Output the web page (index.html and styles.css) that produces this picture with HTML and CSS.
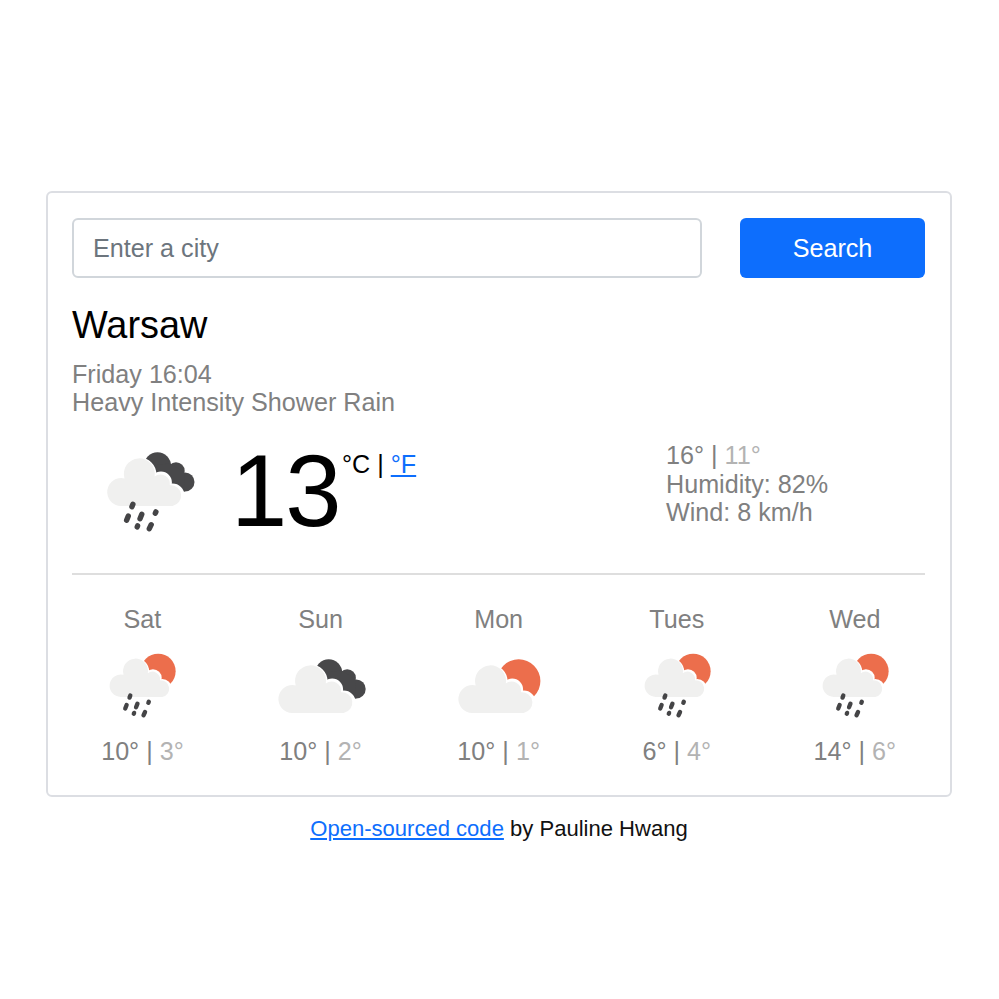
FILE: index.html
```html
<!DOCTYPE html>
<html lang="en">
<head>
<meta charset="utf-8">
<title>Weather</title>
<link rel="stylesheet" href="styles.css">
</head>
<body>
<svg class="sprite" aria-hidden="true">
  <defs>
    <g id="cloud">
      <g class="halo">
        <circle cx="45.5" cy="41.5" r="15.5"/><circle cx="67" cy="49.500" r="9.500"/><circle cx="78.500" cy="62.500" r="10.500"/>
      </g>
      <path class="cloud" d="M27 73a14 14 0 1 1 3.500-27.600A15.500 15.500 0 1 1 60.600 43.500A9.500 9.500 0 0 1 75.800 52.200A10.500 10.500 0 0 1 78.500 73Z"/>
    </g>
    <g id="dark" class="dark">
      <circle cx="63.500" cy="32.800" r="13.500"/><circle cx="82" cy="38" r="8.700"/><circle cx="91" cy="49" r="9.500"/>
      <path d="M63 32L76 30.500L90 39L91 58.500L74 58L60 46Z"/>
    </g>
    <circle id="sun" class="sun" cx="73.500" cy="41" r="21.700"/>
    <path id="rain" class="rain" d="M38.900 71.200L37.900 73.800M34.300 83L32.600 87.300M47.800 81.300L46 85.800M61.900 78.900L61.300 80.300M43.600 92.800L43.200 93.900M57.200 91.700L55.300 95.700"/>
  </defs>
</svg>
<main class="card">
  <form class="search">
    <input class="search-input" type="text" placeholder="Enter a city">
    <button class="search-button" type="button">Search</button>
  </form>
  <h1 class="city">Warsaw</h1>
  <p class="details">Friday 16:04<br>Heavy Intensity Shower Rain</p>
  <section class="current">
    <svg class="current-icon" viewBox="0 0 110 100"><use href="#dark"/><use href="#cloud"/><use href="#rain"/></svg>
    <span class="temperature">13</span>
    <span class="units">°C | <a href="#">°F</a></span>
    <p class="stats">16° | <span class="low">11°</span><br>Humidity: 82%<br>Wind: 8 km/h</p>
  </section>
  <section class="forecast">
    <div class="day"><span>Sat</span><svg class="day-icon" viewBox="0 0 110 90"><g transform="translate(12 -1.8) scale(.805)"><use href="#sun"/><use href="#cloud"/><use href="#rain"/></g></svg><span>10° | <span class="low">3°</span></span></div>
    <div class="day"><span>Sun</span><svg class="day-icon" viewBox="0.8 0 110 90"><use href="#dark"/><use href="#cloud"/></svg><span>10° | <span class="low">2°</span></span></div>
    <div class="day"><span>Mon</span><svg class="day-icon" viewBox="-1.2 0 110 90"><use href="#sun"/><use href="#cloud"/></svg><span>10° | <span class="low">1°</span></span></div>
    <div class="day"><span>Tues</span><svg class="day-icon" viewBox="0 0 110 90"><g transform="translate(12 -1.8) scale(.805)"><use href="#sun"/><use href="#cloud"/><use href="#rain"/></g></svg><span>6° | <span class="low">4°</span></span></div>
    <div class="day"><span>Wed</span><svg class="day-icon" viewBox="0 0 110 90"><g transform="translate(12 -1.8) scale(.805)"><use href="#sun"/><use href="#cloud"/><use href="#rain"/></g></svg><span>14° | <span class="low">6°</span></span></div>
  </section>
</main>
<footer class="footer"><a href="#">Open-sourced code</a> by Pauline Hwang</footer>
</body>
</html>
```
FILE: styles.css
```css
* { box-sizing: border-box; }
body {
  margin: 0;
  padding: 191px 47px 0 46px;
  background: #fff;
  color: #000;
  font-family: "Liberation Sans", Arial, sans-serif;
  font-size: 25.160px;
  line-height: 28.500px;
}
a { color: #0d6efd; text-decoration: underline; }
.sprite { display: block; width: 0; height: 0; }
.card {
  height: 606px;
  padding: 25px 25px 0 24px;
  border: 2px solid #dcdee3;
  border-radius: 6px;
}
.search { display: flex; gap: 38px; }
.search-input {
  flex: 1;
  min-width: 0;
  height: 60px;
  padding: 0 19px;
  border: 2px solid #d1d6db;
  border-radius: 6px;
  font: inherit;
}
.search-input::placeholder { color: #6c757d; opacity: 1; }
.search-button {
  width: 185px;
  height: 60px;
  border: 0;
  border-radius: 6px;
  background: #0d6efd;
  color: #fff;
  font: inherit;
}
.city { margin: 24px 0 0; font-size: 37.900px; font-weight: 400; line-height: 46px; }
.details { margin: 12px 0 0; color: #808080; line-height: 28px; }
.current {
  display: flex;
  height: 159px;
  padding-left: 22px;
  border-bottom: 2px solid #dedede;
}
.current-icon { width: 110px; height: 100px; margin-top: 17px; }
.temperature { margin: 17px 0 0 27px; width: 114px; font-size: 101.200px; line-height: 116px; letter-spacing: -2px; }
.units { margin: 34px 0 0 -3px; width: 76px; white-space: nowrap; }
.stats { margin: 25px 0 0 248px; color: #808080; white-space: nowrap; }
.low { color: #b3b3b3; }
.forecast {
  display: grid;
  grid-template-columns: repeat(5, 178.100px);
  margin: 30px -19px 0 -18.600px;
  color: #808080;
}
.day { display: flex; flex-direction: column; align-items: center; }
.day-icon { width: 110px; height: 90px; margin: 6px 0 7px; }
.footer { margin-top: 18px; text-align: center; font-size: 22.050px; color: #111; }
.halo { fill: #fff; stroke: #fff; stroke-width: 2.800; }
.cloud { fill: #f0f0ef; }
.dark { fill: #48484a; }
.sun { fill: #ec6e4c; }
.rain { fill: none; stroke: #444446; stroke-width: 5.400; stroke-linecap: round; }
```
